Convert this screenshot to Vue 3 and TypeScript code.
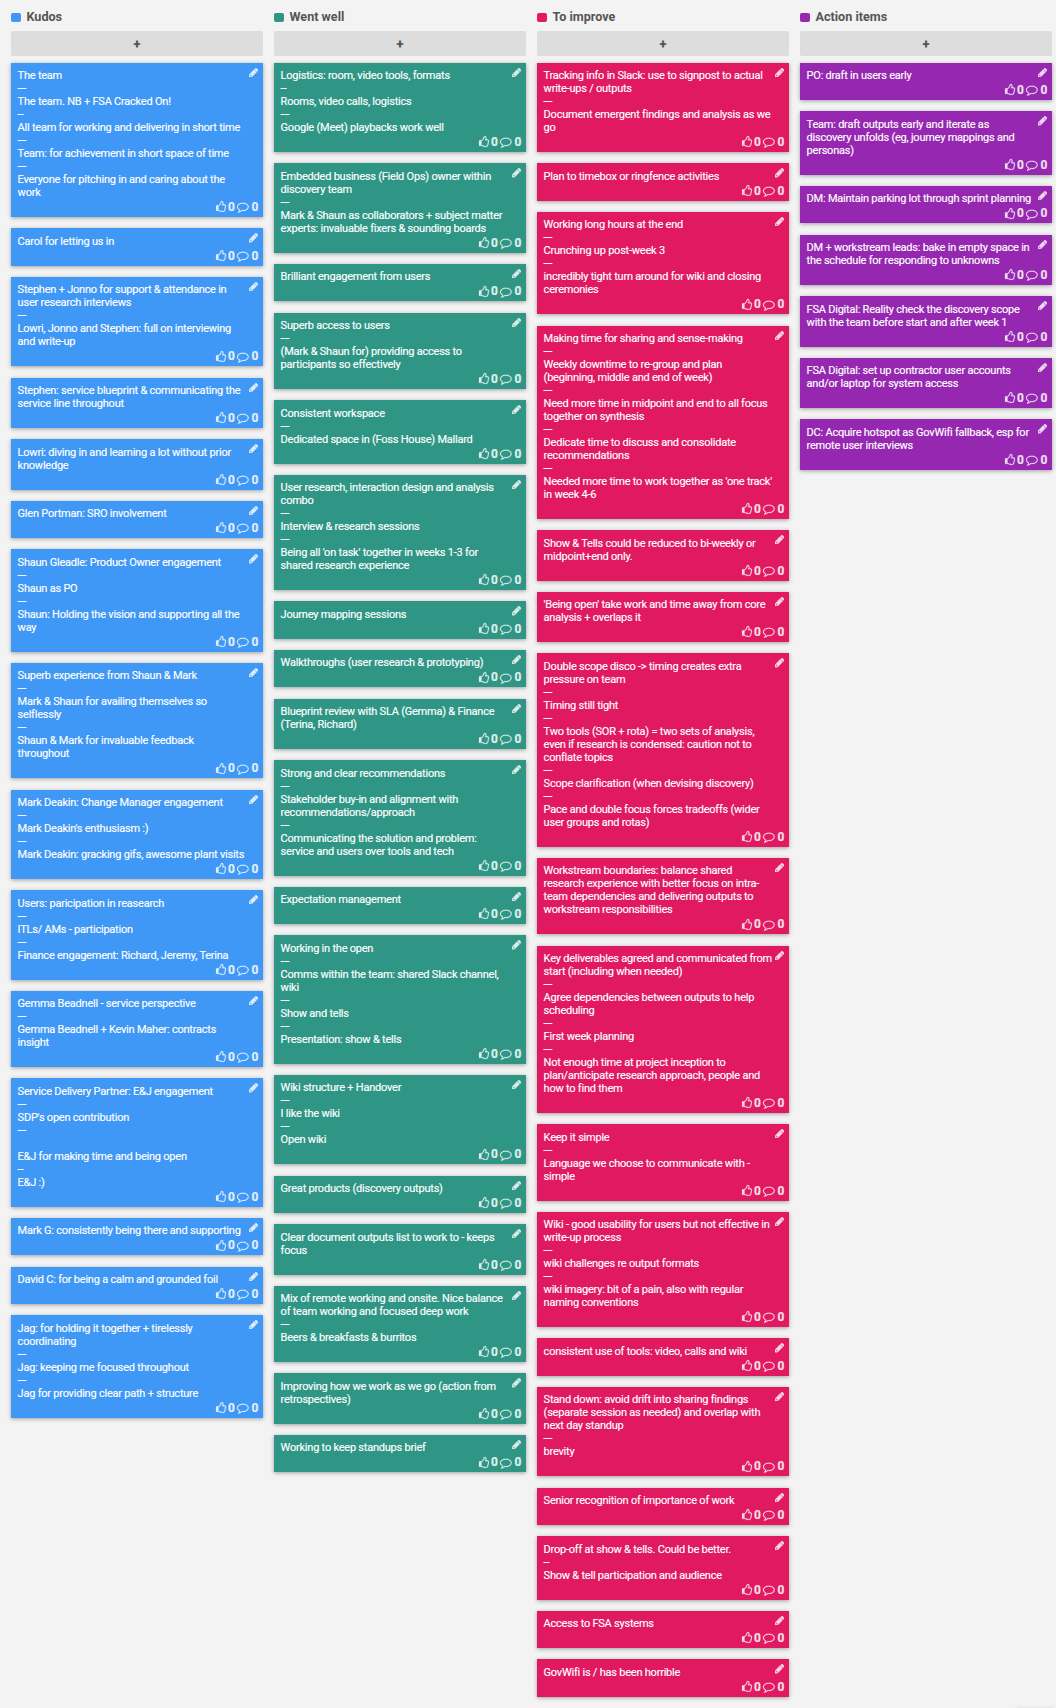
<script setup lang="ts">
interface Column {
  title: string
  tone: string
  cards: string[]
}

const columns: Column[] = [
  {
    title: 'Kudos',
    tone: 'blue',
    cards: [
      'The team\n---\nThe team. NB + FSA Cracked On!\n--\nAll team for working and delivering in short time\n---\nTeam: for achievement in short space of time\n---\nEveryone for pitching in and caring about the\nwork',
      'Carol for letting us in',
      'Stephen + Jonno for support & attendance in\nuser research interviews\n---\nLowri, Jonno and Stephen: full on interviewing\nand write-up',
      'Stephen: service blueprint & communicating the\nservice line throughout',
      'Lowri: diving in and learning a lot without prior\nknowledge',
      'Glen Portman: SRO involvement',
      'Shaun Gleadle: Product Owner engagement\n---\nShaun as PO\n---\nShaun: Holding the vision and supporting all the\nway',
      'Superb experience from Shaun & Mark\n---\nMark & Shaun for availing themselves so\nselflessly\n---\nShaun & Mark for invaluable feedback\nthroughout',
      "Mark Deakin: Change Manager engagement\n---\nMark Deakin's enthusiasm :)\n---\nMark Deakin: gracking gifs, awesome plant visits",
      'Users: paricipation in reasearch\n---\nITLs/ AMs - participation\n---\nFinance engagement: Richard, Jeremy, Terina',
      'Gemma Beadnell - service perspective\n---\nGemma Beadnell + Kevin Maher: contracts\ninsight',
      "Service Delivery Partner: E&J engagement\n---\nSDP's open contribution\n---\n\nE&J for making time and being open\n--\nE&J :)",
      'Mark G: consistently being there and supporting',
      'David C: for being a calm and grounded foil',
      'Jag: for holding it together + tirelessly\ncoordinating\n---\nJag: keeping me focused throughout\n---\nJag for providing clear path + structure',
    ],
  },
  {
    title: 'Went well',
    tone: 'teal',
    cards: [
      'Logistics: room, video tools, formats\n--\nRooms, video calls, logistics\n---\nGoogle (Meet) playbacks work well',
      'Embedded business (Field Ops) owner within\ndiscovery team\n---\nMark & Shaun as collaborators + subject matter\nexperts: invaluable fixers & sounding boards',
      'Brilliant engagement from users',
      'Superb access to users\n---\n(Mark & Shaun for) providing access to\nparticipants so effectively',
      'Consistent workspace\n---\nDedicated space in (Foss House) Mallard',
      "User research, interaction design and analysis\ncombo\n---\nInterview & research sessions\n---\nBeing all 'on task' together in weeks 1-3 for\nshared research experience",
      'Journey mapping sessions',
      'Walkthroughs (user research & prototyping)',
      'Blueprint review with SLA (Gemma) & Finance\n(Terina, Richard)',
      'Strong and clear recommendations\n---\nStakeholder buy-in and alignment with\nrecommendations/approach\n---\nCommunicating the solution and problem:\nservice and users over tools and tech',
      'Expectation management',
      'Working in the open\n---\nComms within the team: shared Slack channel,\nwiki\n---\nShow and tells\n---\nPresentation: show & tells',
      'Wiki structure + Handover\n---\nI like the wiki\n---\nOpen wiki',
      'Great products (discovery outputs)',
      'Clear document outputs list to work to - keeps\nfocus',
      'Mix of remote working and onsite. Nice balance\nof team working and focused deep work\n---\nBeers & breakfasts & burritos',
      'Improving how we work as we go (action from\nretrospectives)',
      'Working to keep standups brief',
    ],
  },
  {
    title: 'To improve',
    tone: 'pink',
    cards: [
      'Tracking info in Slack: use to signpost to actual\nwrite-ups / outputs\n---\nDocument emergent findings and analysis as we\ngo',
      'Plan to timebox or ringfence activities',
      'Working long hours at the end\n---\nCrunching up post-week 3\n---\nincredibly tight turn around for wiki and closing\nceremonies',
      "Making time for sharing and sense-making\n---\nWeekly downtime to re-group and plan\n(beginning, middle and end of week)\n---\nNeed more time in midpoint and end to all focus\ntogether on synthesis\n---\nDedicate time to discuss and consolidate\nrecommendations\n---\nNeeded more time to work together as 'one track'\nin week 4-6",
      'Show & Tells could be reduced to bi-weekly or\nmidpoint+end only.',
      "'Being open' take work and time away from core\nanalysis + overlaps it",
      'Double scope disco -> timing creates extra\npressure on team\n---\nTiming still tight\n---\nTwo tools (SOR + rota) = two sets of analysis,\neven if research is condensed: caution not to\nconflate topics\n---\nScope clarification (when devising discovery)\n---\nPace and double focus forces tradeoffs (wider\nuser groups and rotas)',
      'Workstream boundaries: balance shared\nresearch experience with better focus on intra-\nteam dependencies and delivering outputs to\nworkstream responsibilities',
      'Key deliverables agreed and communicated from\nstart (including when needed)\n---\nAgree dependencies between outputs to help\nscheduling\n---\nFirst week planning\n---\nNot enough time at project inception to\nplan/anticipate research approach, people and\nhow to find them',
      'Keep it simple\n---\nLanguage we choose to communicate with -\nsimple',
      'Wiki - good usability for users but not effective in\nwrite-up process\n---\nwiki challenges re output formats\n---\nwiki imagery: bit of a pain, also with regular\nnaming conventions',
      'consistent use of tools: video, calls and wiki',
      'Stand down: avoid drift into sharing findings\n(separate session as needed) and overlap with\nnext day standup\n---\nbrevity',
      'Senior recognition of importance of work',
      'Drop-off at show & tells. Could be better.\n--\nShow & tell participation and audience',
      'Access to FSA systems',
      'GovWifi is / has been horrible',
    ],
  },
  {
    title: 'Action items',
    tone: 'purple',
    cards: [
      'PO: draft in users early',
      'Team: draft outputs early and iterate as\ndiscovery unfolds (eg, journey mappings and\npersonas)',
      'DM: Maintain parking lot through sprint planning',
      'DM + workstream leads: bake in empty space in\nthe schedule for responding to unknowns',
      'FSA Digital: Reality check the discovery scope\nwith the team before start and after week 1',
      'FSA Digital: set up contractor user accounts\nand/or laptop for system access',
      'DC: Acquire hotspot as GovWifi fallback, esp for\nremote user interviews',
    ],
  },
]
</script>

<template>
  <main class="board">
    <section v-for="col in columns" :key="col.title" class="column" :class="col.tone">
      <h2 class="heading"><span class="swatch"></span>{{ col.title }}</h2>
      <button class="add" type="button">+</button>
      <article v-for="(card, i) in col.cards" :key="i" class="card">
        <p class="text">{{ card }}</p>
        <svg class="pencil" viewBox="128 149 1515 1515" aria-hidden="true">
          <path d="M491 1536l91-91-235-235-91 91v107h128v128h107zM960 416l416 416-832 832h-416v-416zm683 96q0 53-37 90l-166 166-416-416 166-165q36-38 90-38 53 0 91 38l235 234q37 39 37 91z" />
        </svg>
        <footer class="stats">
          <svg class="thumb" viewBox="0 0 1536 1792" aria-hidden="true">
            <path d="M256 1408q0-26-19-45t-45-19-45 19-19 45 19 45 45 19 45-19 19-45zm1152-640q0-51-39-89.500t-89-38.500h-352q0-58 48-159.500t48-160.500q0-98-32-145t-128-47q-26 26-38 85t-30.500 125.500-59.500 109.500q-22 23-77 91-4 5-23 30t-31.500 41-34.500 42.500-40 44-38.500 35.500-40 27-35.500 9h-32v640h32q13 0 31.500 3t33 6.500 38 11 35 11.500 35.500 12.500 29 10.500q211 73 342 73h121q192 0 192-167 0-26-5-56 30-16 47.500-52.500t17.500-73.500-18-69q53-50 53-119 0-25-10-55.500t-25-47.500q32-1 53.500-47t21.500-81zm128-1q0 89-49 163 9 33 9 69 0 77-38 144 3 21 3 43 0 101-60 178 1 139-85 219.500t-227 80.500h-129q-96 0-189.500-22.500t-216.500-65.500q-116-40-138-40h-288q-53 0-90.500-37.500t-37.500-90.500v-640q0-53 37.500-90.500t90.500-37.500h274q36-24 137-155 58-75 107-128 24-25 35.500-85.500t30.500-126.500 62-108q39-37 90-37 84 0 151 32.500t102 101.500 35 186q0 93-48 192h176q104 0 180 76t76 179z" />
          </svg>
          <span>0</span>
          <svg class="comment" viewBox="0 0 1792 1792" aria-hidden="true">
            <path d="M896 384q-204 0-381.500 69.500t-282 187.500-104.500 255q0 112 71.500 213.500t201.500 175.500l87 50-27 96q-24 91-70 172 152-63 275-171l43-38 57 6q69 8 130 8 204 0 381.500-69.500t282-187.500 104.500-255-104.500-255-282-187.500-381.500-69.500zm896 512q0 174-120 321.500t-326 233-450 85.500q-70 0-145-8-198 175-460 242-49 14-114 22h-5q-15 0-27-10.500t-16-27.500v-1q-3-4-.5-12t2-10 4.500-9.500l6-9 7-8.500 8-9q7-8 31-34.500t34.500-38 31-39.500 32.500-51 27-59 26-76q-157-89-247.500-220t-90.500-281q0-130 71-248.500t191-204.500 286-136.500 348-50.500 348 50.500 286 136.500 191 204.500 71 248.500z" />
          </svg>
          <span>0</span>
        </footer>
      </article>
    </section>
    <div class="dock"></div>
  </main>
</template>

<style>
body {
  background: #f3f3f3;
}
</style>

<style scoped>
.board {
  display: flex;
  gap: 11px;
  box-sizing: border-box;
  width: 1056px;
  height: 1708px;
  padding: 0 4px 0 11px;
  overflow: hidden;
  font-family: Roboto, 'Liberation Sans', sans-serif;
}
.column {
  flex: 0 0 252px;
  display: flex;
  flex-direction: column;
}
.heading {
  flex: none;
  display: flex;
  align-items: center;
  gap: 5.500px;
  height: 31px;
  box-sizing: border-box;
  margin: 0;
  padding-top: 1px;
  font-size: 12.600px;
  font-weight: 700;
  line-height: 15px;
  color: #555;
}
.swatch {
  width: 10px;
  height: 9px;
  margin-top: 3px;
  border-radius: 2px;
  background: var(--tone);
}
.add {
  height: 25px;
  flex: none;
  margin: 0 0 6.850px;
  padding: 0;
  border: 0;
  border-radius: 2px;
  background: #ddd;
  font: 900 13px/24px Roboto, 'Liberation Sans', sans-serif;
  color: #555;
}
.card {
  position: relative;
  flex: none;
  box-sizing: border-box;
  margin-bottom: 11.200px;
  padding: 6.400px 6.600px 18.030px;
  background: var(--tone);
  box-shadow: 0 1px 4px rgba(0, 0, 0, 0.35);
  color: #fff;
}
.text {
  margin: 0;
  white-space: pre;
  font-size: 11px;
  line-height: 13px;
  letter-spacing: -0.225px;
  -webkit-text-stroke: 0.15px #fff;
}
.pencil {
  position: absolute;
  top: 5px;
  right: 4.600px;
  width: 9.200px;
  height: 9.200px;
  fill: #fff;
  stroke: #fff;
  stroke-width: 60px;
  opacity: 0.82;
}
.stats {
  position: absolute;
  right: 4.800px;
  bottom: 3px;
  display: flex;
  align-items: center;
  height: 14px;
  font-size: 11.900px;
  font-weight: 700;
  line-height: 14px;
  color: #fff;
  opacity: 0.85;
}
.stats span {
  -webkit-text-stroke: 0.2px #fff;
}
.stats svg {
  height: 11.700px;
  fill: #fff;
  stroke: #fff;
  stroke-width: 30px;
  overflow: visible;
}
.thumb {
  width: 10.030px;
  margin-right: 2.300px;
}
.comment {
  width: 11.700px;
  margin: 0 2.300px 0 2.500px;
}
.blue {
  --tone: #3f97f6;
}
.teal {
  --tone: #2f9686;
}
.pink {
  --tone: #e01961;
}
.purple {
  --tone: #9527b0;
}
.dock {
  position: fixed;
  right: 3px;
  bottom: -25px;
  width: 36px;
  height: 24px;
  background: #ddd;
  box-shadow: 0 1px 4px rgba(0, 0, 0, 0.4);
}
</style>
